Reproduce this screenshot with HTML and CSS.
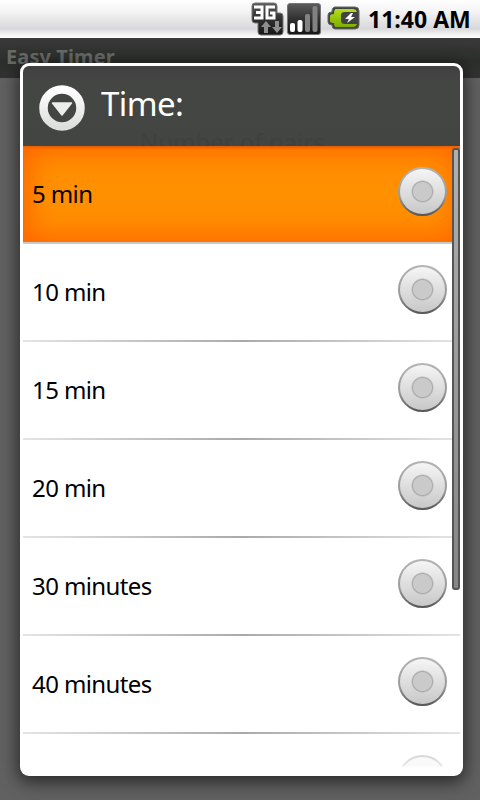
FILE: index.html
```html
<!DOCTYPE html>
<html lang="en">
<head>
  <meta charset="UTF-8">
  <title>Easy Timer</title>
  <link rel="stylesheet" href="styles.css">
</head>
<body>
  <div id="statusBar">
    <svg class="net" width="34" height="34" viewBox="0 0 34 34">
      <defs>
        <linearGradient id="dark" x1="0" y1="0" x2="0" y2="1">
          <stop offset="0" stop-color="#5c5c5c"/>
          <stop offset="0.5" stop-color="#303030"/>
          <stop offset="1" stop-color="#161616"/>
        </linearGradient>
      </defs>
      <path d="M4 1h19q3 0 3 3v7h3q3 0 3 3v16q0 3-3 3H10q-3 0-3-3V21H4q-3 0-3-3V4q0-3 3-3z" fill="url(#dark)" stroke="#777" stroke-width="1"/>
      <path d="M3 5h8v11H3M5 10.500h6M24 5h-8v11h7v-5h-4" fill="none" stroke="#fff" stroke-width="3"/>
      <path d="M15 19l5 6h-3v6h-4v-6h-3zM26 31l-5-6h3v-6h4v6h3z" fill="#8e8e8e"/>
    </svg>
    <svg class="signal" width="34" height="32" viewBox="0 0 34 32">
      <rect x="0.500" y="0.500" width="33" height="31" rx="2.500" fill="url(#dark)" stroke="#777"/>
      <rect x="3" y="20" width="5" height="9" rx="2" fill="#fff"/>
      <rect x="10.500" y="17" width="5" height="12" rx="2" fill="#fff"/>
      <rect x="18" y="11" width="5" height="18" rx="2" fill="#828282"/>
      <rect x="25.500" y="3" width="5" height="26" rx="2" fill="#828282"/>
    </svg>
    <svg class="battery" width="33" height="24" viewBox="0 0 33 24">
      <defs>
        <linearGradient id="green" x1="0" y1="0" x2="0" y2="1">
          <stop offset="0" stop-color="#b4dc20"/>
          <stop offset="1" stop-color="#7eae00"/>
        </linearGradient>
      </defs>
      <path d="M8 1h20q4 0 4 4v14q0 4-4 4H8q-3 0-3-4-4 0-4-3V9q0-3 4-3 0-5 3-5z" fill="#424242" stroke="#666"/>
      <path d="M9 3h17q3 0 4 3H18q-4 0-4 3v6q0 3 4 3h12q-1 3-4 3H9q-2 0-2-4-4 0-4-2v-5q0-2 4-2 0-5 2-5z" fill="url(#green)"/>
      <path d="M24 7l-6 6h4l-2 4 8-6h-4l2-4z" fill="#fff"/>
    </svg>
    <span class="clock">11:40 AM</span>
  </div>

  <div id="screen">
    <div class="app-title">Easy Timer</div>

    <div id="dialog">
      <div class="dialog-header">
        <svg width="46" height="46" viewBox="0 0 46 46">
          <defs>
            <linearGradient id="ring" x1="0" y1="0" x2="0" y2="1">
              <stop offset="0" stop-color="#fff"/>
              <stop offset="1" stop-color="#dedede"/>
            </linearGradient>
          </defs>
          <circle cx="23" cy="23" r="18.500" fill="none" stroke="url(#ring)" stroke-width="8.500"/>
          <path d="M13.500 18h19L23 30z" fill="#ededed" stroke="#ededed" stroke-width="1.500" stroke-linejoin="round"/>
        </svg>
        <h1>Time:</h1>
        <span class="ghost">Number of pairs</span>
      </div>
      <div class="list">
        <div class="item selected"><span>5 min</span><i class="radio"></i></div>
        <div class="item"><span>10 min</span><i class="radio"></i></div>
        <div class="item"><span>15 min</span><i class="radio"></i></div>
        <div class="item"><span>20 min</span><i class="radio"></i></div>
        <div class="item"><span>30 minutes</span><i class="radio"></i></div>
        <div class="item"><span>40 minutes</span><i class="radio"></i></div>
        <div class="item"><i class="radio"></i></div>
        <div class="fade"></div>
        <div class="scrollbar"></div>
      </div>
    </div>
  </div>
</body>
</html>
```
FILE: styles.css
```css
body {
  margin: 0;
  width: 480px;
  height: 800px;
  overflow: hidden;
  font-family: "Noto Sans", "Open Sans", sans-serif;
  background: #5f5f5f;
}

#statusBar {
  display: flex;
  justify-content: flex-end;
  height: 38px;
  padding-right: 10px;
  box-sizing: border-box;
  background: linear-gradient(#fff, #f4f4f4 30%, #d8d8da 75%, #f4f4f4 92%, #fff);
}

#statusBar .net {
  margin: 2px 2px 0 0;
}

#statusBar .signal {
  margin: 3px 6px 0 0;
}

#statusBar .battery {
  margin: 6px 8px 0 0;
}

.clock {
  width: 102px;
  font-family: "Open Sans", "Noto Sans", sans-serif;
  font-size: 23px;
  font-weight: bold;
  line-height: 39px;
  white-space: nowrap;
  color: #000;
}

#screen {
  height: 762px;
  background: #616161;
}

.app-title {
  height: 40px;
  padding-left: 6px;
  box-sizing: border-box;
  font-size: 20px;
  font-weight: bold;
  line-height: 37px;
  letter-spacing: 0.1px;
  color: #686c68;
  background: linear-gradient(#393939, #2b2f2b 60%, #333);
}

/* pulled up so the dialog covers part of the title bar */
#dialog {
  width: 443px;
  height: 713px;
  margin: -15px 0 0 20px;
  padding: 3px;
  box-sizing: border-box;
  border-radius: 9px;
  background: #fff;
  position: relative;
  box-shadow: 0 4px 17px 2px rgba(0, 0, 0, 0.6);
}

.dialog-header {
  display: flex;
  height: 80px;
  padding: 19px 0 0 16px;
  box-sizing: border-box;
  border-radius: 6px 6px 0 0;
  position: relative;
  background: linear-gradient(#404040, #444644 20%, #434543);
}

.dialog-header h1 {
  margin: -4px 0 0 16px;
  font-size: 33px;
  font-weight: normal;
  line-height: 46px;
  letter-spacing: -0.6px;
  color: #fff;
}

/* text of the screen behind, barely showing through */
.ghost {
  position: absolute;
  left: 117px;
  top: 62px;
  font-size: 24px;
  line-height: 28px;
  color: #3f413f;
}

.list {
  height: 627px;
  position: relative;
  overflow: hidden;
  border-radius: 0 0 6px 6px;
}

.item {
  display: flex;
  justify-content: space-between;
  height: 98px;
  padding: 0 13px 0 9px;
  box-sizing: border-box;
  font-size: 24px;
  line-height: 96px;
  letter-spacing: -0.6px;
  color: #000;
  background: linear-gradient(90deg, #e4e4e4, #aaa 50%, #e4e4e4) bottom / 100% 2px no-repeat #fff;
}

.selected {
  border-bottom: 2px solid #c9c9c9;
  background: #ff9000;
  box-shadow: inset 0 0 28px 6px #ff6500, inset 0 2px 2px #b65a10;
}

.radio {
  width: 49px;
  height: 49px;
  margin: 21px 0 0 auto;
  box-sizing: border-box;
  border: 2px solid transparent;
  border-radius: 50%;
  background:
    radial-gradient(circle, #cacaca 9px, #aaa 10px, rgba(200, 200, 200, 0) 11.5px) padding-box,
    linear-gradient(#f5f5f5, #c8c8c8) padding-box,
    linear-gradient(#b5b5b5, #999 60%, #555) border-box;
}

.fade {
  position: absolute;
  left: 0;
  right: 0;
  bottom: 0;
  height: 30px;
  background: linear-gradient(rgba(255, 255, 255, 0.2), rgba(255, 255, 255, 0.7) 75%, #fff 80%);
}

.scrollbar {
  position: absolute;
  top: 2px;
  right: 0;
  width: 8px;
  height: 442px;
  box-sizing: border-box;
  border: 2px solid #555;
  border-radius: 3px;
  background: linear-gradient(#b0b0b0, #858585);
}
```
